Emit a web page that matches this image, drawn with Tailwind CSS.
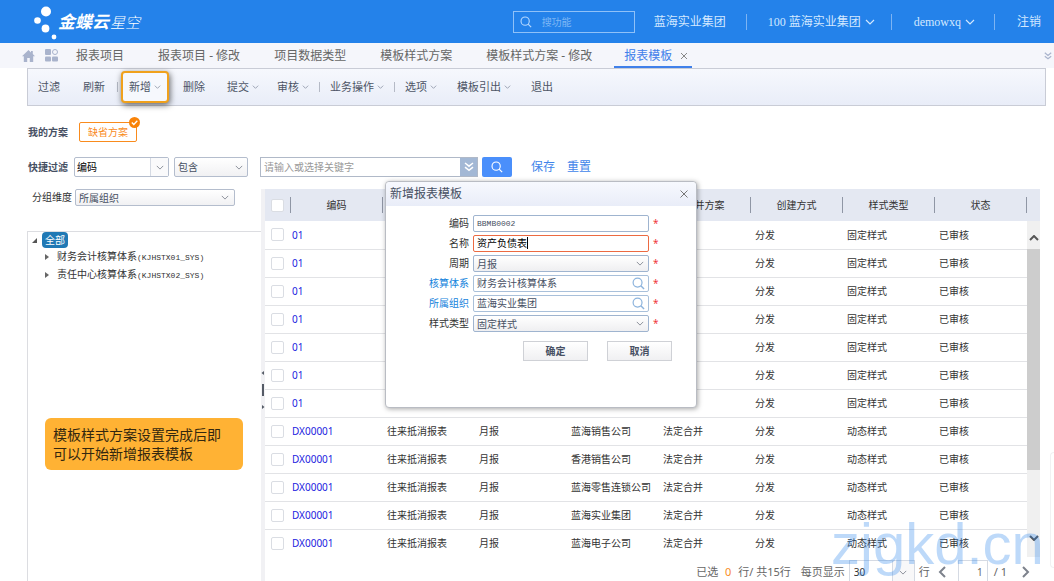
<!DOCTYPE html>
<html lang="zh-CN">
<head>
<meta charset="utf-8">
<title>金蝶云星空 - 报表模板</title>
<script src="https://cdn.jsdelivr.net/npm/@tailwindcss/browser@4"></script>
</head>
<body class="relative flex h-screen flex-col overflow-hidden bg-white font-['Noto_Sans','Noto_Sans_CJK_SC',sans-serif] text-[10px] leading-4 text-[#333]">

<svg class="hidden">
  <symbol id="chev" viewBox="0 0 10 6"><path d="M1 1l4 4 4-4" fill="none" stroke="currentColor" stroke-width="1.2"/></symbol>
  <symbol id="arrow" viewBox="0 0 10 6"><path d="M1 1l4 4 4-4" fill="none" stroke="currentColor" stroke-width="2"/></symbol>
  <symbol id="mag" viewBox="0 0 14 14"><circle cx="6" cy="6" r="4.8" fill="none" stroke="currentColor" stroke-width="1.3"/><path d="M9.5 9.5l3.5 3.5" stroke="currentColor" stroke-width="1.5"/></symbol>
  <symbol id="dbl" viewBox="0 0 10 10"><path d="M1 1l4 3.2L9 1M1 5.2l4 3.2 4-3.2" fill="none" stroke="currentColor" stroke-width="1.5"/></symbol>
</svg>

<header class="flex h-[43px] shrink-0 items-center bg-[#2482ea] pr-[13px] font-['Liberation_Serif','Noto_Sans_CJK_SC',serif] text-xs text-[#d3e8ff]">
  <div class="flex items-center pl-8 font-['Noto_Sans_CJK_SC',sans-serif] text-white">
    <svg class="h-10 w-[26px] overflow-visible" viewBox="0 0 26 40" fill="#fff"><circle cx="14" cy="9.500" r="5"/><circle cx="5.500" cy="18.500" r="3.300"/><circle cx="13.500" cy="26.500" r="3.900"/><circle cx="22" cy="35" r="2.400"/></svg>
    <span class="text-[17px] font-bold italic">金蝶云</span>
    <span class="ml-px text-[15px] font-light italic">星空</span>
  </div>
  <label class="ml-auto flex h-[22px] w-[122px] items-center border border-[#8fc1f8] pl-1.5">
    <svg class="size-3 text-[#b5d8ff]"><use href="#mag"/></svg>
    <input aria-label="搜功能" placeholder="搜功能" class="ml-2.5 w-20 bg-transparent font-['Noto_Sans_CJK_SC',sans-serif] text-[10px] outline-none placeholder:text-[#7fb7f5]">
  </label>
  <a href="#" class="ml-[19px]">蓝海实业集团</a>
  <span class="ml-5 h-4 w-px bg-[#7db4f3]"></span>
  <button class="ml-[21px] flex items-center gap-1">100 蓝海实业集团<svg class="h-1.5 w-2.5"><use href="#chev"/></svg></button>
  <span class="ml-4 h-4 w-px bg-[#7db4f3]"></span>
  <button class="ml-[22px] flex items-center gap-1">demowxq<svg class="h-1.5 w-2.5"><use href="#chev"/></svg></button>
  <span class="ml-[19px] h-4 w-px bg-[#7db4f3]"></span>
  <a href="#" class="ml-[22px]">注销</a>
</header>

<nav class="flex h-[25px] shrink-0 items-center bg-[#f5f6fb] pl-[22px] text-xs text-[#666]">
  <a href="#" aria-label="首页"><svg class="h-3 w-[13px]" viewBox="0 0 13 12" fill="#a9b3cc"><path d="M6.500 0L0 6.300h1.800V12h3.400V8h2.600v4h3.400V6.300H13L10.800 4V1H9v1.400z"/></svg></a>
  <button aria-label="应用" class="ml-2.5"><svg class="size-[13px]" viewBox="0 0 13 13" fill="#a9b3cc"><rect width="6" height="6" rx="1"/><circle cx="10" cy="3" r="2.500" fill="none" stroke="#a9b3cc"/><rect y="7.500" width="6" height="5" rx="1"/><rect x="7" y="7.500" width="6" height="5" rx="1"/></svg></button>
  <div class="ml-[18px] flex h-full items-center gap-[34px]">
    <a href="#">报表项目</a><a href="#">报表项目 - 修改</a><a href="#">项目数据类型</a><a href="#">模板样式方案</a><a href="#">模板样式方案 - 修改</a>
  </div>
  <div class="ml-[22px] flex h-full items-center gap-2 border-b-2 border-[#4080ea] pt-0.5 pr-1 pl-2.5 text-[#4080ea]">
    <a href="#">报表模板</a>
    <button aria-label="关闭"><svg class="size-2" viewBox="0 0 8 8"><path d="M1 1l6 6M7 1l-6 6" stroke="#888"/></svg></button>
  </div>
  <button aria-label="更多" class="mr-0.5 ml-auto text-[#a9b3cc]"><svg class="size-2"><use href="#dbl"/></svg></button>
</nav>

<div class="mr-2 ml-[27px] flex h-[38px] shrink-0 items-center border border-[#c9ccd6] bg-linear-to-b from-[#f6f8fd] to-[#e9edf8] pl-2.5 text-[11px] text-[#4d5566]">
  <button>过滤</button>
  <button class="ml-[23px]">刷新</button>
  <span class="ml-3 h-2.5 w-px bg-[#b5bac6]"></span>
  <button class="ml-[3px] flex h-8 items-center gap-[3px] rounded border-2 border-[#f0a11c] bg-[#f6f8fd] px-1.5 shadow-[1px_2px_6px_rgba(0,0,0,0.6)]">新增<svg class="h-1 w-[7px] text-[#8a93a5]"><use href="#chev"/></svg></button>
  <button class="ml-3.5">删除</button>
  <button class="ml-[22px] flex items-center gap-[3px]">提交<svg class="h-1 w-[7px] text-[#8a93a5]"><use href="#chev"/></svg></button>
  <button class="ml-[18px] flex items-center gap-[3px]">审核<svg class="h-1 w-[7px] text-[#8a93a5]"><use href="#chev"/></svg></button>
  <span class="ml-2.5 h-2.5 w-px bg-[#b5bac6]"></span>
  <button class="ml-2.5 flex items-center gap-[3px]">业务操作<svg class="h-1 w-[7px] text-[#8a93a5]"><use href="#chev"/></svg></button>
  <span class="ml-2.5 h-2.5 w-px bg-[#b5bac6]"></span>
  <button class="ml-2.5 flex items-center gap-[3px]">选项<svg class="h-1 w-[7px] text-[#8a93a5]"><use href="#chev"/></svg></button>
  <button class="ml-5 flex items-center gap-[3px]">模板引出<svg class="h-1 w-[7px] text-[#8a93a5]"><use href="#chev"/></svg></button>
  <button class="ml-5">退出</button>
</div>

<div class="mt-4 flex h-5 shrink-0 items-center pl-7">
  <span class="w-[51px] font-bold text-[#475063]">我的方案</span>
  <button class="relative h-5 w-[58px] rounded-xs border border-[#f98b1d] text-[#f98b1d]">缺省方案
    <svg class="absolute -top-1.5 -right-1 size-[11px]" viewBox="0 0 11 11"><circle cx="5.500" cy="5.500" r="5.500" fill="#f98308"/><path d="M2.800 5.500l2 2 3.500-3.800" fill="none" stroke="#fff" stroke-width="1.300"/></svg>
  </button>
</div>

<div class="mt-[15px] flex h-5 shrink-0 items-center pl-7">
  <label for="field" class="w-[46px] font-bold text-[#475063]">快捷过滤</label>
  <div class="flex h-5 w-[95px] rounded-xs border border-[#b4bdcd]">
    <input id="field" value="编码" class="min-w-0 flex-1 pl-0.5 text-black outline-none">
    <button aria-label="展开" class="flex w-[18px] items-center justify-center border-l border-[#d5dae3] bg-[#fafafb] text-[#8a8f99]"><svg class="h-[5px] w-2"><use href="#chev"/></svg></button>
  </div>
  <div class="relative ml-[5px]">
    <select aria-label="条件" class="block h-5 w-[74px] appearance-none rounded-xs border border-[#b4bdcd] bg-linear-to-b from-white to-[#f1f1f3] pl-[3px] text-[#475063]"><option>包含</option></select>
    <svg class="pointer-events-none absolute top-2 right-[5px] h-[5px] w-2 text-[#8a8f99]"><use href="#chev"/></svg>
  </div>
  <div class="ml-3 flex h-5 w-[218px] border border-[#b0b9c8]">
    <input aria-label="关键字" placeholder="请输入或选择关键字" class="min-w-0 flex-1 pl-[3px] outline-none placeholder:text-[#999]">
    <button aria-label="展开条件" class="flex w-[17px] items-center justify-center bg-[#a3b8d5] text-white"><svg class="size-2.5"><use href="#dbl"/></svg></button>
  </div>
  <button aria-label="搜索" class="ml-1 flex h-5 w-[30px] items-center justify-center rounded-xs bg-[#4a8ffb] text-white"><svg class="size-3"><use href="#mag"/></svg></button>
  <a href="#" class="ml-[19px] text-xs text-[#3f85ea]">保存</a>
  <a href="#" class="ml-3 text-xs text-[#3f85ea]">重置</a>
</div>

<main class="mt-3 mr-3.5 ml-[27px] flex min-h-0 flex-1">
  <aside class="flex w-[234px] shrink-0 flex-col">
    <div class="flex h-[42px] items-start">
      <label for="dim" class="w-12 pl-[5px]">分组维度</label>
      <div class="relative">
        <select id="dim" class="block h-[17px] w-40 appearance-none rounded-xs border border-[#b4bdcd] bg-linear-to-b from-white to-[#f1f1f3] pl-[3px] text-[#475063]"><option>所属组织</option></select>
        <svg class="pointer-events-none absolute top-1.5 right-1.5 h-[5px] w-2 text-[#8a8f99]"><use href="#chev"/></svg>
      </div>
    </div>
    <div class="flex-1 border-t border-l border-[#dcdde1]">
      <div class="flex items-center pl-1"><svg class="size-[5px]" viewBox="0 0 5 5"><path d="M5 0v5H0z" fill="#555"/></svg><a href="#" class="ml-[5px] rounded-sm bg-[#2079b5] px-[3px] text-white">全部</a></div>
      <div class="flex h-[18px] items-center pl-[17px]"><svg class="h-1.5 w-1" viewBox="0 0 4 6"><path d="M0 0l4 3-4 3z" fill="#666"/></svg><a href="#" class="ml-2">财务会计核算体系<span class="font-['Liberation_Mono',monospace] text-[8px]">(KJHSTX01_SYS)</span></a></div>
      <div class="flex h-[18px] items-center pl-[17px]"><svg class="h-1.5 w-1" viewBox="0 0 4 6"><path d="M0 0l4 3-4 3z" fill="#666"/></svg><a href="#" class="ml-2">责任中心核算体系<span class="font-['Liberation_Mono',monospace] text-[8px]">(KJHSTX02_SYS)</span></a></div>
    </div>
  </aside>

  <div class="flex w-1 shrink-0 flex-col items-center bg-[#f1f1f4] pt-[182px]">
    <svg class="h-[38px] w-1" viewBox="0 0 4 38" fill="#555b66"><path d="M3 0v4L.5 2zM1 13h2v12H1zM1 34v4l2.500-2z"/></svg>
  </div>

  <section class="flex min-w-0 flex-1 flex-col">
    <div class="flex">
      <table class="w-full table-fixed border-collapse text-left">
        <thead class="bg-[#e4e8f2]"><tr id="head" class="h-8"></tr></thead>
        <tbody id="rows"></tbody>
      </table>
      <div class="flex w-[13px] shrink-0 flex-col items-center bg-[#f0f0f0] text-[#555]">
        <div class="h-8 w-full bg-[#e4e8f2]"></div>
        <svg class="mt-3.5 mb-2 h-1.5 w-2.5 rotate-180"><use href="#arrow"/></svg>
        <div class="h-[221px] w-full bg-[#cdcdcd]"></div>
        <svg class="mt-auto mb-4 h-1.5 w-2.5"><use href="#arrow"/></svg>
      </div>
    </div>
    <div class="mt-[3px] flex items-center justify-end pr-2.5 text-[11px] text-[#666]">
      <span>已选 <span class="mx-1 text-[#f98b1d]">0</span> 行/ 共15行</span>
      <label for="size" class="ml-2.5">每页显示</label>
      <div class="ml-1 flex h-6 w-[66px] border border-[#d5dae3]">
        <input id="size" value="30" class="min-w-0 flex-1 pl-1 text-[10px] text-[#333] outline-none">
        <button aria-label="每页行数" class="flex w-[22px] items-center justify-center border-l border-[#d5dae3] bg-[#f8f8f9] text-[#8a8f99]"><svg class="h-[5px] w-2"><use href="#chev"/></svg></button>
      </div>
      <span class="ml-1">行</span>
      <button aria-label="上一页" class="ml-2"><svg class="h-3 w-2" viewBox="0 0 8 12"><path d="M7 1L2 6l5 5" fill="none" stroke="#7d828c" stroke-width="2"/></svg></button>
      <input aria-label="页码" value="1" class="ml-3 h-6 w-[30px] border border-[#d5dae3] pr-1 text-right text-[10px] outline-none">
      <span class="ml-1.5">/ 1</span>
      <button aria-label="下一页" class="ml-[15px]"><svg class="h-3 w-2" viewBox="0 0 8 12"><path d="M1 1l5 5-5 5" fill="none" stroke="#7d828c" stroke-width="2"/></svg></button>
    </div>
  </section>
</main>

<div class="absolute top-[418px] left-[45px] w-[198px] rounded-md bg-[#ffb234] px-2 py-[7px] text-sm leading-[19px] text-[#33270f]">模板样式方案设置完成后即<br>可以开始新增报表模板</div>

<div role="dialog" aria-labelledby="dlg" class="absolute top-[181px] left-[385px] flex h-[227px] w-[312px] flex-col rounded border border-[#b9bcc3] bg-white shadow-[1px_1px_5px_rgba(0,0,0,0.35)]">
  <div class="flex h-6 shrink-0 items-center justify-between rounded-t bg-linear-to-b from-[#f7f9fe] to-[#e9edf8] pr-2 pl-1">
    <h2 id="dlg" class="text-xs text-[#475063]">新增报表模板</h2>
    <button aria-label="关闭"><svg class="size-2" viewBox="0 0 8 8"><path d="M.5.5l7 7M7.500.5l-7 7" stroke="#777"/></svg></button>
  </div>
  <form class="mt-[7px] grid auto-rows-[20px] grid-cols-[83px_176px_1fr] items-center gap-x-1">
    <label for="f1" class="text-right">编码</label>
    <input id="f1" value="BBMB0002" class="h-[17px] rounded-xs border border-[#9fb4cf] px-[3px] font-['Liberation_Mono',monospace] text-[8px] text-[#475063]">
    <span class="text-[#f0383c]">*</span>
    <label for="f2" class="text-right">名称</label>
    <div class="flex h-[17px] items-center rounded-xs border border-[#ec6a42] px-[3px]">
      <input id="f2" value="资产负债表" class="h-3.5 w-[50px] text-black outline-none"><span class="h-3 w-px bg-black"></span>
    </div>
    <span class="text-[#f0383c]">*</span>
    <label for="f3" class="text-right">周期</label>
    <div class="relative">
      <select id="f3" class="block h-[17px] w-full appearance-none rounded-xs border border-[#9fb4cf] bg-linear-to-b from-white to-[#efeff1] px-[3px] text-[#475063]"><option>月报</option></select>
      <svg class="pointer-events-none absolute top-1.5 right-[5px] h-[5px] w-2 text-[#8a8f99]"><use href="#chev"/></svg>
    </div>
    <span class="text-[#f0383c]">*</span>
    <label for="f4" class="text-right text-[#1583dc]">核算体系</label>
    <div class="flex h-[17px] items-center rounded-xs border border-[#a9c0da] px-[3px]">
      <input id="f4" value="财务会计核算体系" class="h-3.5 min-w-0 flex-1 text-[#475063] outline-none"><button type="button" aria-label="查找核算体系" class="text-[#8db4dd]"><svg class="size-[13px]"><use href="#mag"/></svg></button>
    </div>
    <span class="text-[#f0383c]">*</span>
    <label for="f5" class="text-right text-[#1583dc]">所属组织</label>
    <div class="flex h-[17px] items-center rounded-xs border border-[#a9c0da] px-[3px]">
      <input id="f5" value="蓝海实业集团" class="h-3.5 min-w-0 flex-1 text-[#475063] outline-none"><button type="button" aria-label="查找组织" class="text-[#8db4dd]"><svg class="size-[13px]"><use href="#mag"/></svg></button>
    </div>
    <span class="text-[#f0383c]">*</span>
    <label for="f6" class="text-right">样式类型</label>
    <div class="relative">
      <select id="f6" class="block h-[17px] w-full appearance-none rounded-xs border border-[#9fb4cf] bg-linear-to-b from-white to-[#efeff1] px-[3px] text-[#475063]"><option>固定样式</option></select>
      <svg class="pointer-events-none absolute top-1.5 right-[5px] h-[5px] w-2 text-[#8a8f99]"><use href="#chev"/></svg>
    </div>
    <span class="text-[#f0383c]">*</span>
  </form>
  <div class="mt-2 flex justify-end gap-[19px] pr-6">
    <button class="h-5 w-[65px] border border-[#cfd1d6] bg-linear-to-b from-white to-[#f0f0f2] font-bold text-[#475063]">确定</button>
    <button class="h-5 w-[65px] border border-[#cfd1d6] bg-linear-to-b from-white to-[#f0f0f2] font-bold text-[#475063]">取消</button>
  </div>
</div>

<div class="absolute top-[452px] right-0 h-[116px] w-1 rounded-l border border-r-0 border-[#f1f1f3] bg-white"></div>
<div class="pointer-events-none absolute top-[512px] left-[831px] font-['Liberation_Sans',sans-serif] text-[58px] leading-[63px] text-[#2482ea]/30">zjgkd.cn</div>

<script>
const heads = ['编码', '名称', '周期', '所属组织', '合并方案', '创建方式', '样式类型', '状态'];
const box = '<input type="checkbox" aria-label="选择" class="block size-[13px] appearance-none rounded-xs border border-[#dadde3] bg-white">';
document.getElementById('head').innerHTML =
  '<th class="w-[26px] p-0"><div class="flex h-4 items-center border-r border-[#8f96a5] pl-1.5">' + box + '</div></th>' +
  heads.map(h => '<th class="p-0 font-normal"><div class="h-4 border-r border-[#8f96a5] text-center">' + h + '</div></th>').join('');
const orgs = ['蓝海销售公司', '香港销售公司', '蓝海零售连锁公司', '蓝海实业集团', '蓝海电子公司'];
const rows = [];
for (let i = 0; i < 7; i++) rows.push(['01', '', '', '', '', '分发', '固定样式', '已审核']);
orgs.forEach(o => rows.push(['DX00001', '往来抵消报表', '月报', o, '法定合并', '分发', '动态样式', '已审核']));
document.getElementById('rows').innerHTML = rows.map(r =>
  '<tr class="h-7 border-b border-[#e2e3e6] last:border-0"><td class="p-0 pl-1.5">' + box + '</td>' +
  r.map((c, i) => i ? '<td class="p-0 pl-1 whitespace-nowrap">' + c + '</td>'
    : '<td class="p-0 pl-px"><a href="#" class="text-[#2222e0]">' + c + '</a></td>').join('') + '</tr>').join('');
</script>
</body>
</html>
